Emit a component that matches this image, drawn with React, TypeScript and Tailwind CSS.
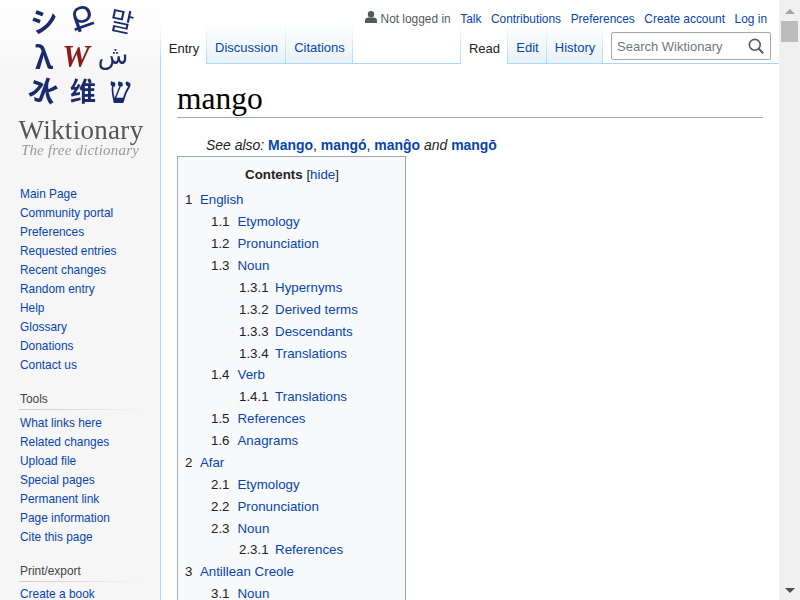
const LINK = "text-[#0645ad]";

const navMain = [
  "Main Page",
  "Community portal",
  "Preferences",
  "Requested entries",
  "Recent changes",
  "Random entry",
  "Help",
  "Glossary",
  "Donations",
  "Contact us",
];

const navTools = [
  "What links here",
  "Related changes",
  "Upload file",
  "Special pages",
  "Permanent link",
  "Page information",
  "Cite this page",
];

const tocItems: [number, string, string][] = [
  [0, "1", "English"],
  [1, "1.1", "Etymology"],
  [1, "1.2", "Pronunciation"],
  [1, "1.3", "Noun"],
  [2, "1.3.1", "Hypernyms"],
  [2, "1.3.2", "Derived terms"],
  [2, "1.3.3", "Descendants"],
  [2, "1.3.4", "Translations"],
  [1, "1.4", "Verb"],
  [2, "1.4.1", "Translations"],
  [1, "1.5", "References"],
  [1, "1.6", "Anagrams"],
  [0, "2", "Afar"],
  [1, "2.1", "Etymology"],
  [1, "2.2", "Pronunciation"],
  [1, "2.3", "Noun"],
  [2, "2.3.1", "References"],
  [0, "3", "Antillean Creole"],
  [1, "3.1", "Noun"],
];

function Logo() {
  return (
    <div className="flex h-[160px] flex-col items-center pt-[2px]">
      <div className="ml-[6px] grid w-[117px] grid-cols-3 justify-items-center text-[#1b2a6b] blur-[0.3px] [font-family:'Noto_Sans_CJK_JP',sans-serif]">
        <span className="h-[35px] -rotate-12 text-[28px] leading-[35px] font-bold">シ</span>
        <span className="h-[35px] rotate-[-20deg] text-[32px] leading-[35px] [font-family:'DejaVu_Sans',sans-serif]">Ք</span>
        <span className="h-[35px] rotate-12 text-[26px] leading-[35px] [font-family:'Noto_Sans_CJK_KR',sans-serif]">말</span>
        <span className="h-[35px] translate-y-[2px] text-[32px] leading-[35px] font-semibold [font-family:'Noto_Sans',sans-serif]">λ</span>
        <span className="h-[35px] -translate-x-[7px] translate-y-[2px] text-[31px] leading-[35px] font-bold text-[#8b1a1a] italic [font-family:'Liberation_Serif',serif]">W</span>
        <span className="h-[35px] -translate-x-[9px] translate-y-[1px] text-[25px] leading-[35px] [font-family:'DejaVu_Sans',sans-serif]">ش</span>
        <span className="h-[35px] rotate-[20deg] text-[28px] leading-[35px] font-bold">水</span>
        <span className="h-[35px] text-[26px] leading-[35px] font-bold [font-family:'Noto_Sans_CJK_SC',sans-serif]">维</span>
        <span className="h-[35px] -translate-x-[2px] scale-y-125 text-[30px] leading-[35px] font-bold [font-family:'DejaVu_Serif',serif]">ש</span>
      </div>
      <div className="mt-[9px] ml-[2px] text-[27px] leading-[28px] tracking-[0.3px] text-[#555] blur-[0.3px] [font-family:'Liberation_Serif',serif]">
        Wiktionary
      </div>
      <div className="text-[15px] leading-[12px] tracking-[0.2px] text-[#999] italic blur-[0.3px] [font-family:'Liberation_Serif',serif]">
        The free dictionary
      </div>
    </div>
  );
}

function NavList({ items }: { items: string[] }) {
  return (
    <ul className="pl-[20px]">
      {items.map((item) => (
        <li key={item} className={`h-[19px] text-[11.9px] leading-[19px] whitespace-nowrap ${LINK}`}>
          {item}
        </li>
      ))}
    </ul>
  );
}

function NavHeading({ title, spacing }: { title: string; spacing: string }) {
  return (
    <div className={`mt-[14px] ml-[19px] mr-[17px] ${spacing}`}>
      <div className="h-[20px] pl-px text-[11.9px] leading-[20px] text-[#444]">{title}</div>
      <div className="h-px bg-gradient-to-r from-[#c8ccd1] via-[#dcdfe3] to-transparent" />
    </div>
  );
}

function Sidebar() {
  return (
    <aside className="h-[600px] w-[160px] shrink-0 overflow-hidden bg-gradient-to-b from-white to-[#f6f6f6] to-[80px]">
      <Logo />
      <div className="h-[25px]" />
      <NavList items={navMain} />
      <NavHeading title="Tools" spacing="mb-[4px]" />
      <NavList items={navTools} />
      <NavHeading title="Print/export" spacing="mb-[3px]" />
      <NavList items={["Create a book"]} />
    </aside>
  );
}

function Sep() {
  return <div className="h-[40px] w-px shrink-0 bg-gradient-to-b from-white to-[#a7d7f9]" />;
}

function Tab({ label, active, width }: { label: string; active?: boolean; width: string }) {
  return (
    <div
      className={`flex h-[40px] shrink-0 items-center justify-center pt-[9px] pl-px text-[13px] ${width} ${
        active
          ? "bg-white text-[#222]"
          : `border-b border-b-[#a7d7f9] bg-gradient-to-b from-white to-[#e8f2f8] ${LINK}`
      }`}
    >
      {label}
    </div>
  );
}

function Header() {
  return (
    <header className="h-[64px] shrink-0">
      <div className="flex h-[24px] items-start justify-end gap-[9.6px] pt-[12px] pr-[12px] text-[11.9px] leading-[14px]">
        <span className="flex items-start gap-[4px] text-[#54595d]">
          <svg width="12" height="12" viewBox="0 0 12 12" fill="#54595d" className="-mt-px">
            <circle cx="6" cy="3.2" r="3.2" />
            <path d="M0 12V9.4C0 7.6 1.8 6.6 3.2 6.6h5.6c1.4 0 3.2 1 3.2 2.8V12z" />
          </svg>
          Not logged in
        </span>
        <span className={LINK}>Talk</span>
        <span className={LINK}>Contributions</span>
        <span className={LINK}>Preferences</span>
        <span className={LINK}>Create account</span>
        <span className={LINK}>Log in</span>
      </div>
      <div className="flex h-[40px] items-start">
        <Tab label="Entry" active width="w-[45px]" />
        <Sep />
        <Tab label="Discussion" width="w-[78px]" />
        <Sep />
        <Tab label="Citations" width="w-[66px]" />
        <Sep />
        <div className="h-[40px] flex-1 border-b border-[#a7d7f9]" />
        <Sep />
        <Tab label="Read" active width="w-[46px]" />
        <Sep />
        <Tab label="Edit" width="w-[38px]" />
        <Sep />
        <Tab label="History" width="w-[55px]" />
        <Sep />
        <div className="h-[40px] w-[176px] shrink-0 border-b border-[#a7d7f9] pt-[8px] pl-[8px]">
          <div className="flex h-[28px] w-[160px] items-center justify-between rounded-[2px] border border-[#a2a9b1] bg-white pr-[6px] pl-[5px] text-[13px] text-[#72777d]">
            <span className="pt-px">Search Wiktionary</span>
            <svg width="16" height="16" viewBox="0 0 16 16" fill="none" stroke="#54595d" strokeWidth="1.6">
              <circle cx="6.8" cy="6.8" r="5.4" />
              <path d="M10.8 10.8L15.2 15.2" strokeWidth="2" />
            </svg>
          </div>
        </div>
      </div>
    </header>
  );
}

function Toc() {
  return (
    <div className="w-[229px] border border-[#a2a9b1] bg-[#f8f9fa] px-[7px] pt-[8px] text-[13.3px]">
      <div className="h-[22px] pl-px text-center leading-[20px] text-[#222]">
        <span className="font-bold">Contents</span> <span className="text-[#222]">[</span>
        <span className={LINK}>hide</span>
        <span className="text-[#222]">]</span>
      </div>
      <ul className="mt-[2.4px]">
        {tocItems.map(([level, num, label], index) => (
          <li
            key={index}
            className={`flex h-[21.89px] leading-[21px] whitespace-nowrap ${
              level === 1 ? "gap-[8px] pl-[26px]" : level === 2 ? "gap-[6.5px] pl-[54px]" : "gap-[7.5px]"
            }`}
          >
            <span className="text-[#222]">{num}</span>
            <span className={LINK}>{label}</span>
          </li>
        ))}
      </ul>
    </div>
  );
}

function Scrollbar() {
  return (
    <div className="flex h-[600px] w-[21px] shrink-0 flex-col items-center bg-[#f0f0f0]">
      <div className="mt-[9px] h-0 w-0 border-x-[5px] border-b-[5px] border-x-transparent border-b-[#a3a3a3]" />
      <div className="mt-[7px] h-[21px] w-[17px] bg-[#bcbcbc]" />
      <div className="flex-1" />
      <div className="mb-[7px] h-0 w-0 border-x-[5px] border-t-[5px] border-x-transparent border-t-[#505050]" />
    </div>
  );
}

export default function App() {
  return (
    <div className="flex h-[600px] w-[800px] overflow-hidden bg-white [font-family:'Liberation_Sans',Arial,sans-serif]">
      <Sidebar />
      <main className="flex h-[600px] w-[619px] shrink-0 flex-col overflow-hidden">
        <div className="flex h-full">
          <div className="h-full w-px shrink-0 bg-gradient-to-b from-white from-[25px] to-[#a7d7f9] to-[64px]" />
          <div className="flex min-w-0 flex-1 flex-col">
            <Header />
            <div className="min-h-0 flex-1 overflow-hidden pr-[16px] pl-[16px]">
              <h1 className="mt-[16px] h-[38px] border-b border-[#a2a9b1] text-[31.5px] leading-[37px] text-black [font-family:'Liberation_Serif',serif]">
                mango
              </h1>
              <p className="mt-[17px] h-[21px] pl-[29px] text-[13.96px] leading-[21px] text-[#222]">
                <i>See also:</i>{" "}
                <b className={LINK}>Mango</b>, <b className={LINK}>mangó</b>, <b className={LINK}>manĝo</b>{" "}
                <i>and</i> <b className={LINK}>mangō</b>
              </p>
              <Toc />
            </div>
          </div>
        </div>
      </main>
      <Scrollbar />
    </div>
  );
}
